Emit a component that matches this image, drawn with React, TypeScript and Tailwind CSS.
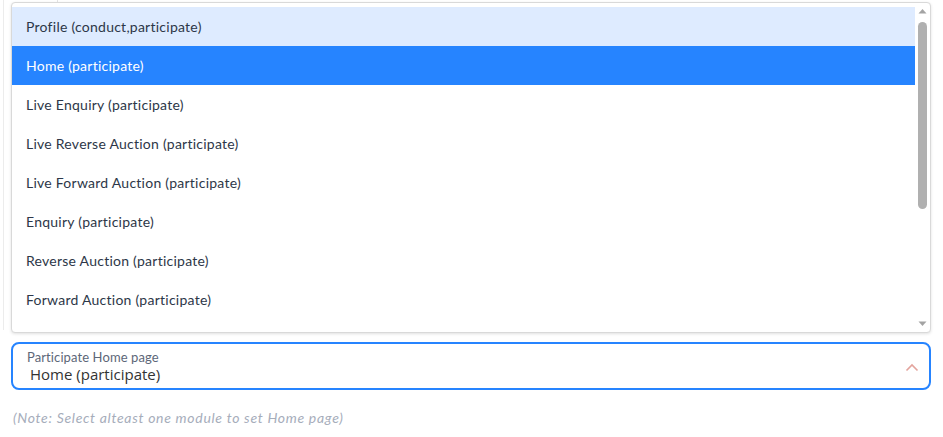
import React from "react";

const options = [
  "Profile (conduct,participate)",
  "Home (participate)",
  "Live Enquiry (participate)",
  "Live Reverse Auction (participate)",
  "Live Forward Auction (participate)",
  "Enquiry (participate)",
  "Reverse Auction (participate)",
  "Forward Auction (participate)",
];

export default function App() {
  return (
    <div
      className="relative w-[943px] h-[437px] bg-white overflow-hidden"
      style={{ fontFamily: "Lato, 'Noto Sans', sans-serif" }}
    >
      <div className="absolute left-[3px] top-0 h-[330px] w-px bg-[#ececec]" />
      <div className="absolute left-[57px] top-0 h-[8px] w-px bg-[#e4e4e4]" />
      <div className="relative pl-[11px] pr-[12px] pt-[2px]">
        <div className="flex h-[331px] rounded-[4px] border border-[#d9d9d9] bg-white shadow-[0_1px_3px_rgba(0,0,0,0.12)] overflow-hidden">
          <div className="flex-1 pt-[4px] overflow-hidden">
            {options.map((o, i) => (
              <div
                key={o}
                className={
                  "h-[39px] flex items-center pl-[14px] pb-[1px] text-[14px] tracking-[0.25px] " +
                  (i === 0
                    ? "bg-[#deebff] text-[#2d3748]"
                    : i === 1
                    ? "bg-[#2684ff] text-white"
                    : "text-[#2d3748]")
                }
              >
                {o}
              </div>
            ))}
          </div>
          <div className="w-[15px] flex flex-col items-center pt-[5px] pb-[5px]">
            <svg width="9" height="6" viewBox="0 0 9 6">
              <path d="M0.5 5.5 L4.5 1 L8.5 5.5 Z" fill="#a3a3a3" />
            </svg>
            <div className="mt-[8px] w-[9px] h-[187px] rounded-full bg-[#b0b0b0]" />
            <div className="flex-1" />
            <svg width="9" height="6" viewBox="0 0 9 6">
              <path d="M0.5 0.5 L8.5 0.5 L4.5 5 Z" fill="#a3a3a3" />
            </svg>
          </div>
        </div>
        <div className="mt-[9px] h-[48px] rounded-[8px] border-2 border-[#2684ff] flex items-center pl-[14px] pr-[10px]">
          <div className="flex-1 flex flex-col">
            <div className="text-[13px] leading-[16px] text-[#5d6778] tracking-[0.1px]">
              Participate Home page
            </div>
            <div
              className="text-[15px] leading-[18px] text-[#333] pl-[3px]"
              style={{ fontFamily: "'Open Sans', 'Noto Sans', sans-serif" }}
            >
              Home (participate)
            </div>
          </div>
          <svg width="14" height="9" viewBox="0 0 14 9" className="mt-[2px]">
            <path d="M1.5 7.5 L7 2 L12.5 7.5" stroke="#e3a49d" strokeWidth="1.6" fill="none" />
          </svg>
        </div>
        <div className="mt-[17px] pl-[2px] text-[14px] italic text-[#a6adbb] tracking-[0.7px]">
          (Note: Select alteast one module to set Home page)
        </div>
      </div>
    </div>
  );
}
